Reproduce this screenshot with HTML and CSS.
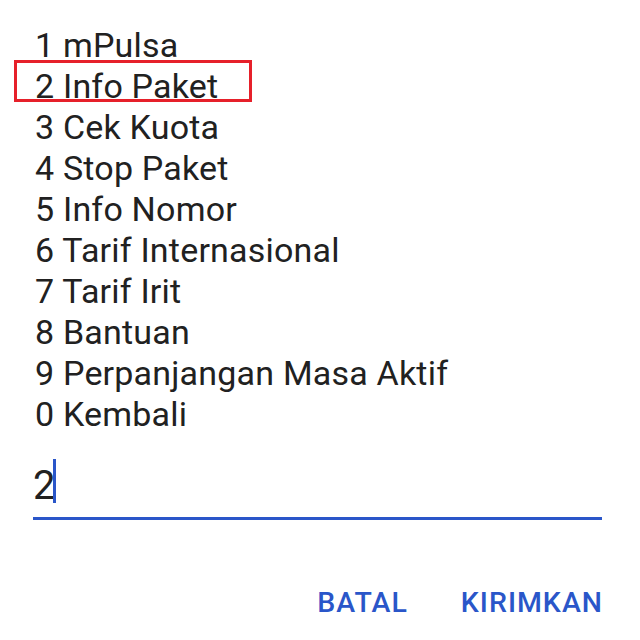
FILE: index.html
```html
<!DOCTYPE html>
<html>
<head>
<meta charset="utf-8">
<link rel="stylesheet" href="styles.css">
</head>
<body>
<div class="dialog">
  <ul class="menu">
    <li>1 mPulsa</li>
    <li class="hl">2 Info Paket</li>
    <li>3 Cek Kuota</li>
    <li>4 Stop Paket</li>
    <li>5 Info Nomor</li>
    <li>6 Tarif Internasional</li>
    <li>7 Tarif Irit</li>
    <li>8 Bantuan</li>
    <li>9 Perpanjangan Masa Aktif</li>
    <li>0 Kembali</li>
  </ul>
  <div class="field">
    <span class="value">2</span><span class="caret"></span>
  </div>
  <div class="actions">
    <span class="btn">BATAL</span>
    <span class="btn">KIRIMKAN</span>
  </div>
</div>
</body>
</html>
```

FILE: styles.css
```css
html, body {
  margin: 0;
  padding: 0;
  background: #ffffff;
}
body {
  font-family: Roboto, "Noto Sans", sans-serif;
  color: #212121;
}
.dialog {
  width: 640px;
  height: 640px;
  box-sizing: border-box;
  padding: 25px 38px 0 35px;
}
.menu {
  list-style: none;
  margin: 0;
  padding: 0;
  font-size: 34px;
  letter-spacing: 0.2px;
  line-height: 41px;
}
.menu li {
  position: relative;
  white-space: nowrap;
}
.hl::before {
  content: "";
  position: absolute;
  left: -21px;
  top: -6px;
  width: 232px;
  height: 36px;
  border: 3px solid #e6202a;
}
.field {
  margin: 24px 0 0 -2px;
  height: 58px;
  border-bottom: 3px solid #2a56c9;
  display: flex;
  align-items: flex-start;
  font-size: 40px;
  line-height: 44px;
}
.value {
  margin-top: 5px;
}
.caret {
  display: block;
  width: 3px;
  height: 44px;
  margin-left: -2px;
  background: #2a56c9;
}
.actions {
  display: flex;
  justify-content: flex-end;
  gap: 54px;
  margin-top: 67px;
  font-size: 28.5px;
  letter-spacing: 1px;
  font-weight: 500;
  color: #2a56c9;
  line-height: 32px;
}
.btn {
  margin-right: -1px;
}
```
